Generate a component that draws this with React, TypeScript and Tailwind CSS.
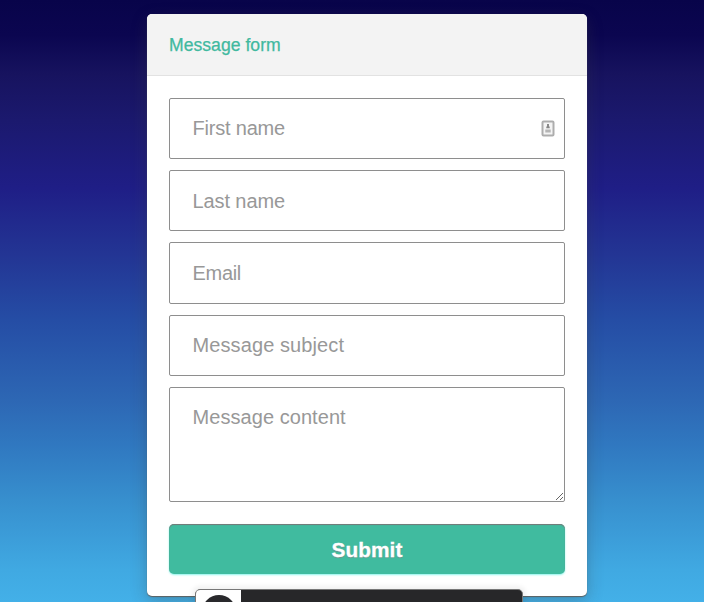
const fieldClass =
  'block w-full rounded-[2px] border border-[#8e8e8e] bg-white px-[22.5px] text-[20px] text-[#555] outline-none placeholder:text-[#989898] placeholder:opacity-100';

function ContactIcon() {
  return (
    <svg viewBox="0 0 14 17" className="h-[17px] w-[14px]" fill="none">
      <rect x="1.5" y="1.5" width="11" height="14" rx="1" fill="#f4f4f4" stroke="#adadad" strokeWidth="2" />
      <path d="M7 4v3M5.3 7.4h3.4" stroke="#858585" strokeWidth="1.9" />
      <path d="M4.3 10.3h5.4M4.3 11.8h5.4" stroke="#b5b5b5" strokeWidth="1.5" />
    </svg>
  );
}

export default function App() {
  return (
    <div className="relative h-[602px] w-[704px] overflow-hidden bg-[linear-gradient(180deg,#08044a_0px,#0b0650_35px,#17135f_75px,#1b196e_120px,#1f1e86_188px,#233594_255px,#254da5_320px,#2d67b4_400px,#3078c0_445px,#378fce_500px,#40a9e2_570px,#43b0e8_602px)] font-['Liberation_Sans',Arial,sans-serif]">
      <main className="ml-[147px] flex w-[440px] flex-col pt-[14px]">
        <form
          className="flex h-[582px] flex-col rounded-[5px] bg-white shadow-[0_1px_1px_rgba(95,90,85,0.9),0_5px_16px_rgba(60,60,60,0.3)]"
          onSubmit={(event) => event.preventDefault()}
        >
          <header className="flex h-[62px] shrink-0 items-center rounded-t-[5px] border-b border-[#e2e2e2] bg-[#f3f3f3] px-[22px]">
            <h1 className="text-[17.6px] leading-5 tracking-[0.02px] text-[#41b99f] [-webkit-text-stroke:0.25px_#41b99f]">Message form</h1>
          </header>
          <div className="flex flex-col px-[22px] pt-[22px]">
            <div className="relative mb-[11px]">
              <input className={`${fieldClass} h-[61px] tracking-[-0.2px]`} placeholder="First name" />
              <span className="absolute right-[10px] top-[22px]"><ContactIcon /></span>
            </div>
            <input className={`${fieldClass} mb-[11px] h-[61px] pt-[2px] tracking-[-0.1px]`} placeholder="Last name" />
            <input className={`${fieldClass} mb-[11px] h-[62px] tracking-[-0.3px]`} placeholder="Email" />
            <input className={`${fieldClass} mb-[11px] h-[61px] tracking-[0.1px]`} placeholder="Message subject" />
            <textarea className={`${fieldClass} mb-[22px] h-[115px] pt-[17px] leading-6 tracking-[0.06px]`} placeholder="Message content" />
            <button className="h-[50px] rounded-[5px] bg-[#40bb9f] pt-[1px] text-[20.8px] font-bold tracking-[0.1px] text-white shadow-[inset_0_1px_1px_#777,0_1px_2px_#8ff5ec] [-webkit-text-stroke:0.3px_white] [text-shadow:0_1px_1px_#77918a]">
              Submit
            </button>
          </div>
        </form>
      </main>
      <aside className="absolute left-[195px] top-[589px] flex h-[50px] w-[328px] overflow-hidden rounded-[5px] border border-[#777] bg-[#272729] shadow-[0_0_5px_3px_rgba(0,0,0,0.06)]">
        <div className="flex w-[45px] justify-center bg-white pt-[5px]">
          <div className="h-[34px] w-[34px] rounded-full bg-[#29292c]" />
        </div>
      </aside>
    </div>
  );
}
